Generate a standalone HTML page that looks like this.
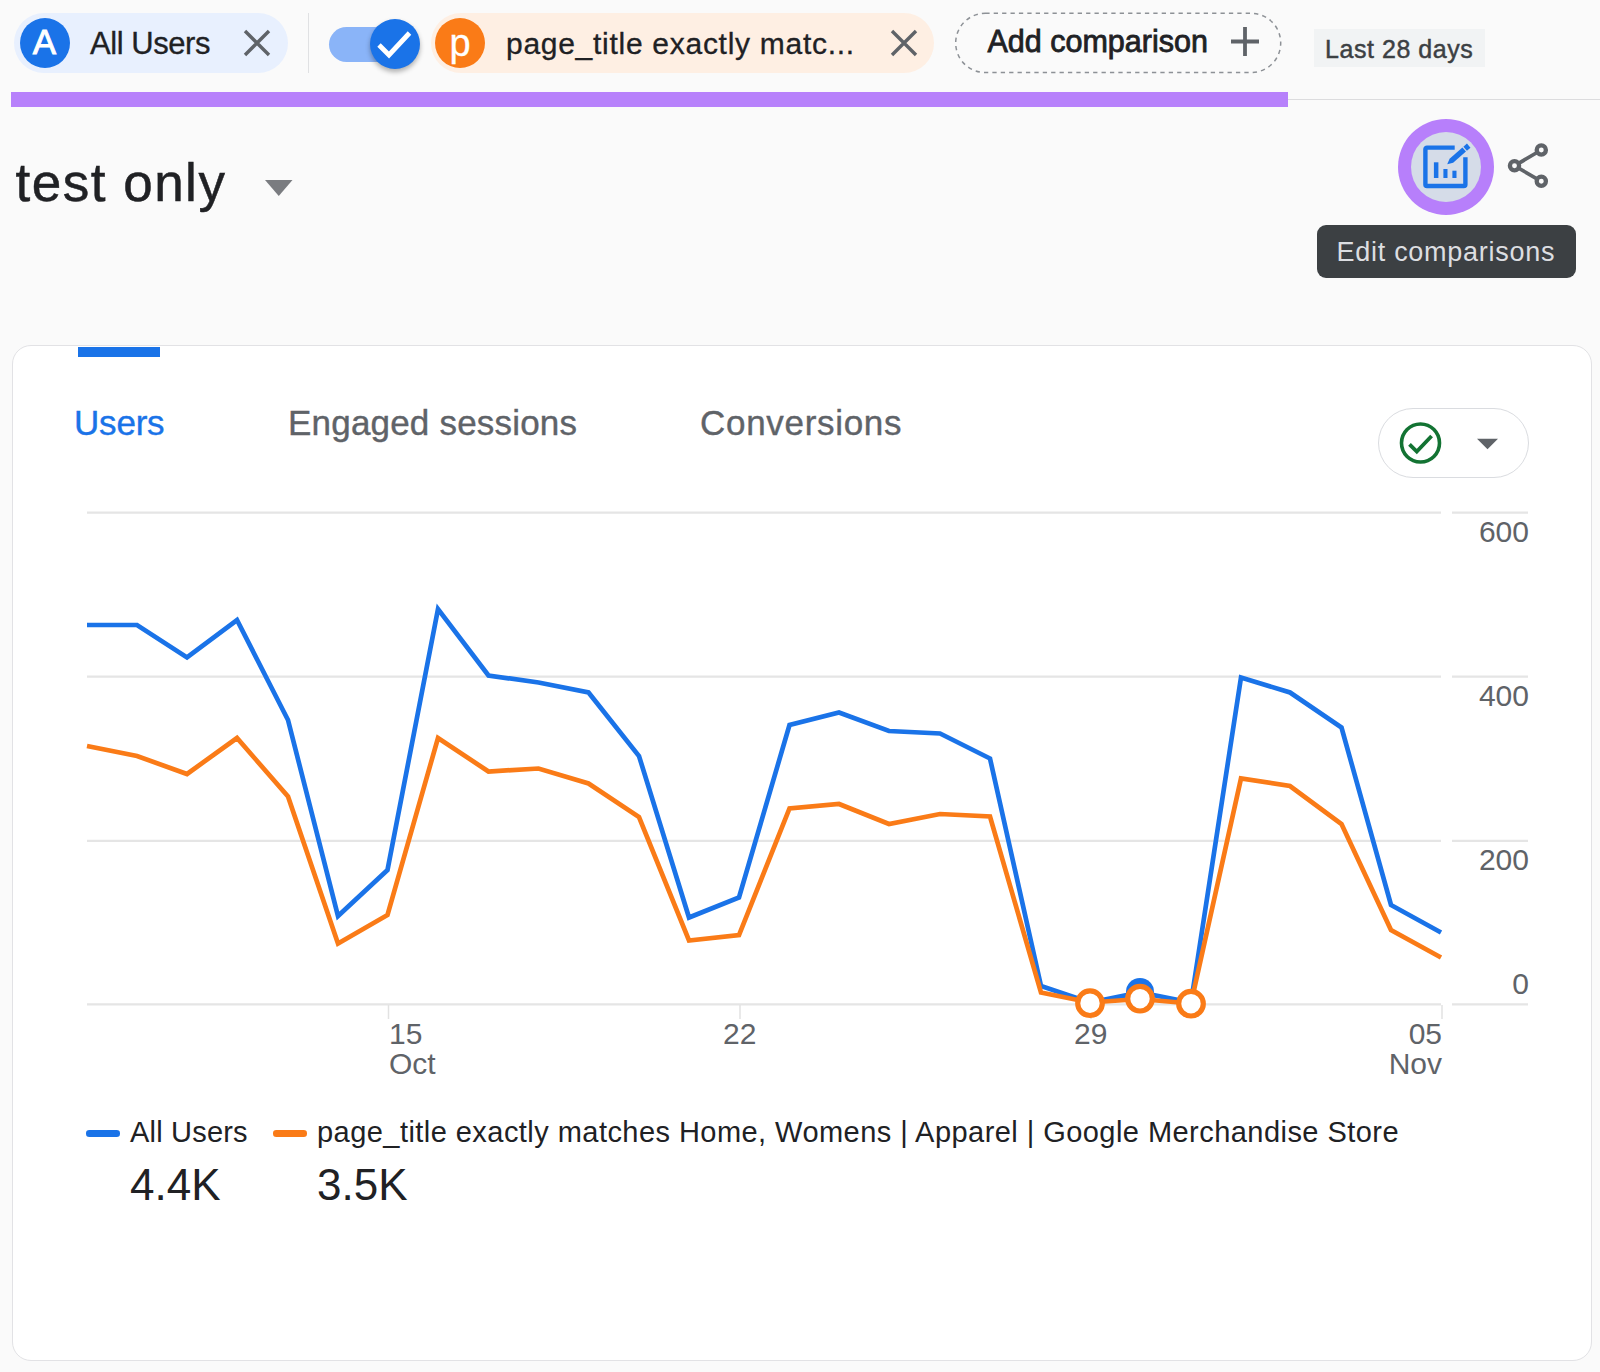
<!DOCTYPE html>
<html><head><meta charset="utf-8"><title>test only</title>
<style>
html,body{margin:0;padding:0;}
body{width:1600px;height:1372px;background:#fafafa;position:relative;overflow:hidden;font-family:"Liberation Sans",sans-serif;color:#202124;}
.abs{position:absolute;}
.chip{position:absolute;top:12.5px;height:60.6px;border-radius:31px;}
.av{position:absolute;width:50px;height:50px;border-radius:50%;color:#fff;text-align:center;font-size:30px;line-height:50px;}
.t{position:absolute;white-space:nowrap;line-height:1;}
.card{position:absolute;left:11.5px;top:345.3px;width:1580.5px;height:1015.7px;background:#fff;border:1.8px solid #e2e2e5;border-radius:19px;box-sizing:border-box;}
svg{position:absolute;left:0;top:0;}
</style></head><body>
<!-- top bar -->
<div class="chip" style="left:14px;width:274px;background:#e8f0fe;"></div>
<div class="av" style="left:19.5px;top:17.5px;background:#1a73e8;font-size:35px;-webkit-text-stroke:.9px #fff;line-height:47.5px;">A</div>
<div class="t" id="t_allusers" style="left:90px;top:27.5px;font-size:31px;letter-spacing:-.45px;-webkit-text-stroke:.3px #202124;">All Users</div>
<div class="abs" style="left:307.5px;top:12.5px;width:1.5px;height:60px;background:#e0e1e3;"></div>
<div class="abs" style="left:329px;top:26.5px;width:70px;height:35px;border-radius:17.5px;background:#8ab4f8;"></div>
<div class="abs" style="left:369.5px;top:19px;width:50px;height:50px;border-radius:50%;background:#1a73e8;box-shadow:0 3px 5px rgba(0,0,0,.3);"></div>
<div class="chip" style="left:431px;width:503px;background:#feefe3;"></div>
<div class="av" style="left:435px;top:17.5px;background:#fa7b17;font-size:38px;-webkit-text-stroke:.3px #fff;line-height:50px;">p</div>
<div class="t" id="t_pt" style="left:506px;top:29px;font-size:30px;letter-spacing:.72px;-webkit-text-stroke:.3px #202124;">page_title exactly matc...</div>

<div class="t" id="t_add" style="left:987.5px;top:26px;font-size:30.5px;-webkit-text-stroke:.8px #202124;">Add comparison</div>
<div class="abs" style="left:1314px;top:28.8px;width:170.5px;height:38.4px;background:#f1f3f4;"></div>
<div class="t" id="t_last" style="left:1325px;top:36.7px;font-size:25px;color:#3c4043;-webkit-text-stroke:.45px #3c4043;letter-spacing:.55px;">Last 28 days</div>
<div class="abs" style="left:1288px;top:98.6px;width:312px;height:1.5px;background:#dcdcde;"></div>
<div class="abs" style="left:10.5px;top:91.8px;width:1277.7px;height:15px;background:#b781fb;"></div>
<!-- heading -->
<div class="t" id="t_head" style="left:15.5px;top:155.5px;font-size:53px;letter-spacing:1.5px;-webkit-text-stroke:.5px #202124;">test only</div>
<!-- edit comparisons -->
<div class="abs" style="left:1398px;top:119px;width:96px;height:96px;border-radius:50%;background:#b77ffb;"></div>
<div class="abs" style="left:1411px;top:132px;width:70px;height:70px;border-radius:50%;background:#d5dce8;"></div>
<div class="abs" style="left:1317px;top:225px;width:259px;height:53px;border-radius:9px;background:#3c4043;"></div>
<div class="t" id="t_tip" style="left:1336.5px;top:238.6px;font-size:27px;color:#dcdee1;letter-spacing:.72px;">Edit comparisons</div>
<!-- card -->
<div class="card"></div>
<div class="abs" style="left:78.3px;top:347.3px;width:81.7px;height:9.4px;background:#1a73e8;"></div>
<div class="t" id="t_users" style="left:74px;top:405px;font-size:35px;letter-spacing:-.2px;color:#1a73e8;-webkit-text-stroke:.4px #1a73e8;">Users</div>
<div class="t" id="t_eng" style="left:288px;top:405px;font-size:35px;color:#5f6368;-webkit-text-stroke:.4px #5f6368;letter-spacing:.2px;">Engaged sessions</div>
<div class="t" id="t_conv" style="left:700px;top:405px;font-size:35px;color:#5f6368;-webkit-text-stroke:.4px #5f6368;letter-spacing:.7px;">Conversions</div>
<div class="abs" style="left:1378px;top:408px;width:151px;height:70px;border-radius:35px;border:1.5px solid #dadce0;box-sizing:border-box;background:#fff;"></div>
<!-- axis labels -->
<div class="t" style="right:71px;top:517px;font-size:30px;color:#5f6368;">600</div>
<div class="t" style="right:71px;top:681px;font-size:30px;color:#5f6368;">400</div>
<div class="t" style="right:71px;top:845px;font-size:30px;color:#5f6368;">200</div>
<div class="t" style="right:71px;top:969px;font-size:30px;color:#5f6368;">0</div>
<div class="t" style="left:389px;top:1019px;font-size:30px;color:#5f6368;">15</div>
<div class="t" style="left:389px;top:1049px;font-size:30px;color:#5f6368;">Oct</div>
<div class="t" style="left:723px;top:1019px;font-size:30px;color:#5f6368;">22</div>
<div class="t" style="left:1074px;top:1019px;font-size:30px;color:#5f6368;">29</div>
<div class="t" style="right:158px;top:1019px;font-size:30px;color:#5f6368;">05</div>
<div class="t" style="right:158px;top:1049px;font-size:30px;color:#5f6368;">Nov</div>
<!-- legend -->
<div class="abs" style="left:86px;top:1130px;width:34px;height:6.5px;border-radius:3.3px;background:#1a73e8;"></div>
<div class="t" id="t_l1" style="left:130px;top:1118px;font-size:29px;letter-spacing:.2px;">All Users</div>
<div class="t" id="t_v1" style="left:130px;top:1163px;font-size:44px;">4.4K</div>
<div class="abs" style="left:273px;top:1130px;width:34px;height:6.5px;border-radius:3.3px;background:#fa7b17;"></div>
<div class="t" id="t_l2" style="left:317px;top:1118px;font-size:29px;letter-spacing:.45px;">page_title exactly matches Home, Womens | Apparel | Google Merchandise Store</div>
<div class="t" id="t_v2" style="left:317px;top:1163px;font-size:44px;">3.5K</div>
<svg width="1600" height="1372" viewBox="0 0 1600 1372">
<!-- close icons -->
<g stroke="#5f6368" stroke-width="3.4" fill="none">
<path d="M245 31 L269 55 M269 31 L245 55"/>
<path d="M892 31 L916 55 M916 31 L892 55"/>
<path d="M1231 41.5 H1259 M1245 27 V56" stroke-width="3.8"/>
</g>
<!-- toggle check -->
<path d="M379 45 L389 55 L409.5 33" stroke="#fff" stroke-width="4.8" fill="none"/>
<rect x="955.7" y="13.3" width="325" height="59.3" rx="29.6" fill="none" stroke="#8d9196" stroke-width="1.5" stroke-dasharray="4.3 4.1"/>
<!-- heading caret -->
<path d="M265 180 H292.5 L278.75 196 Z" fill="#7a7c80"/>
<!-- gridlines -->
<g stroke="#e5e5e5" stroke-width="2.3">
<path d="M87 512.6 H1441 M1452 512.6 H1528"/>
<path d="M87 676.6 H1441 M1452 676.6 H1528"/>
<path d="M87 840.8 H1441 M1452 840.8 H1528"/>
<path d="M87 1004.3 H1441 M1452 1004.3 H1528"/>
</g>
<g stroke="#e2e2e2" stroke-width="1.5"><path d="M388.5 1005 V1019 M740 1005 V1019 M1091 1005 V1019 M1442 1005 V1019"/></g>
<polyline points="87,625 137,625 187,657.5 237,620 288,720 338,916 387.5,870 438,609 488.5,675.5 538.5,682.5 588.5,692.5 639,756 689,917.5 739,897.5 789.5,725 839,712.5 889,731 940,733.5 990,758.5 1041,986 1090,1002.5 1140,992.5 1191,1002.5 1241,677.5 1290,692.5 1341.5,727.5 1391,905 1441,932.5" fill="none" stroke="#1a73e8" stroke-width="4.7" stroke-linejoin="miter"/>
<polyline points="87,746 137,756 187,774 237,738 288,796.5 338,943.5 387.5,915 438,738 488.5,771.5 538.5,768.5 588.5,783.5 639,817 689,940.5 739,935 789.5,808.5 839,804 889,824 940,814 990,816.5 1041,992.5 1090,1002.5 1140,999 1191,1003.5 1241,778.5 1290,786 1341.5,824 1391,930 1441,957.5" fill="none" stroke="#fa7b17" stroke-width="4.7" stroke-linejoin="miter"/>
<circle cx="1140" cy="992" r="14" fill="#1a73e8"/>
<g fill="#fff" stroke="#fa7b17" stroke-width="5.2">
<circle cx="1090" cy="1003.2" r="12.3"/><circle cx="1140" cy="998.7" r="12.3"/><circle cx="1191" cy="1003.7" r="12.3"/>
</g>
<!-- check circle -->
<circle cx="1420.5" cy="443" r="19" fill="none" stroke="#137333" stroke-width="3.6"/>
<path d="M1409.5 444.3 L1416.8 451.6 L1431.6 436" fill="none" stroke="#137333" stroke-width="3.8"/>
<path d="M1477 438.8 H1498 L1487.5 449.3 Z" fill="#5f6368"/>
<!-- edit icon -->
<g fill="none" stroke="#1a73e8" stroke-width="4.4">
<path d="M1454.700 147.600 H1427 a1.600 1.600 0 0 0 -1.600 1.600 V184.400 a1.600 1.600 0 0 0 1.600 1.600 H1463.800 a1.600 1.600 0 0 0 1.600 -1.600 V157.200"/>
</g>
<g fill="#1a73e8">
<rect x="1433.900" y="162.300" width="4.500" height="15.700"/><rect x="1443.400" y="169" width="4.100" height="9"/><rect x="1452.400" y="170.700" width="4.100" height="7.300"/>
<g transform="translate(1447.200 164.300) rotate(-41)">
<path d="M0 0 L5.500 -2.700 H22.500 V2.700 H5.500 Z"/><rect x="23.800" y="-2.700" width="4.700" height="5.400"/>
</g>
</g>
<!-- share icon -->
<g fill="none" stroke="#5f6368" stroke-width="3.700">
<path d="M1541.300 150 L1514.500 165.800 L1541.300 181.300"/>
</g>
<g fill="#fafafa" stroke="#5f6368" stroke-width="4.300">
<circle cx="1541.300" cy="150" r="4.600"/><circle cx="1514.500" cy="165.800" r="4.600"/><circle cx="1541.300" cy="181.300" r="4.600"/>
</g>
</svg>
</body></html>
